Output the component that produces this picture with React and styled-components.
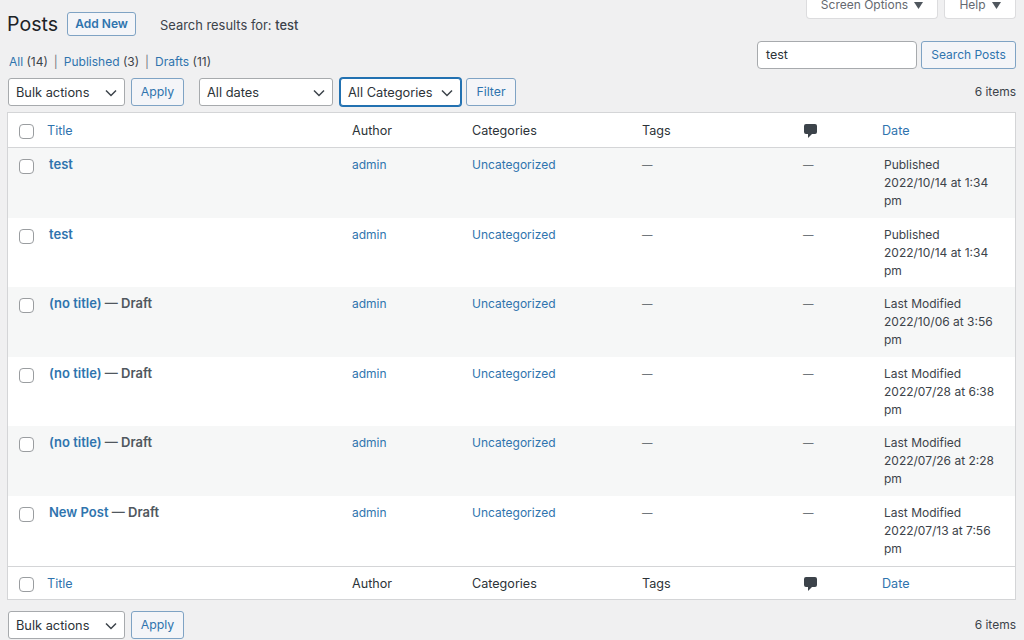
import React from "react";
import styled, { createGlobalStyle } from "styled-components";

const Global = createGlobalStyle`
  html, body { margin: 0; padding: 0; background: #f0f0f1; }
  body { font-family: Inter, "Liberation Sans", sans-serif; font-size: 12px; line-height: 18px; color: #3c434a; overflow: hidden; }
  * { box-sizing: border-box; }
`;

const Page = styled.div`
  width: 1024px;
  height: 640px;
  padding: 0 8px 0 7px;
  overflow: hidden;
`;
const Header = styled.header`
  display: flex;
  justify-content: space-between;
  align-items: flex-start;
  height: 70px;
`;
const HeadLeft = styled.div`
  display: flex;
  flex-direction: column;
  padding-top: 12px;
  padding-left: 1px;
`;
const TitleRow = styled.div`
  display: flex;
  align-items: center;
  height: 24px;
`;
const Heading = styled.h1`
  margin: 0 0 0 -1px;
  font-size: 19.6px;
  font-weight: 400;
  line-height: 24px;
  color: #1d2327;
`;
const OutlineButton = styled.button`
  font-family: inherit;
  font-size: 12px;
  line-height: 18px;
  height: ${p => p.$h || 28}px;
  width: ${p => p.$w}px;
  padding: 0;
  color: #2f74ae;
  background: #f4f5f8;
  border: 1px solid #7fa3c4;
  border-radius: 3px;
  font-weight: ${p => p.$bold ? 600 : 400};
  flex: none;
`;
const AddNew = styled(OutlineButton)`
  margin-left: 9px;
`;
const SearchNote = styled.span`
  margin-left: 24px;
  padding-top: 4px;
  font-size: 12.9px;
  strong { font-weight: 500; }
`;
const Views = styled.div`
  margin-top: 16px;
  padding: 1px 0 0 1px;
  height: 18px;
  display: flex;
  gap: 6px;
  font-size: 12px;
  white-space: pre;
  a { color: #2f74ae; }
`;
const Sep = styled.span`
  color: #787c82;
`;
const HeadRight = styled.div`
  display: flex;
  flex-direction: column;
  align-items: flex-end;
`;
const Tabs = styled.div`
  display: flex;
  gap: 6px;
  height: 19px;
`;
const Tab = styled.div`
  width: ${p => p.$w}px;
  height: 19px;
  background: #fff;
  border: 1px solid #dcdcde;
  border-top: none;
  border-radius: 0 0 4px 4px;
  display: flex;
  justify-content: center;
  align-items: flex-end;
  gap: 6px;
  padding-bottom: 4px;
  color: #646970;
  line-height: 18px;
  svg { margin-bottom: 5px; }
`;
const SearchRow = styled.div`
  display: flex;
  gap: 4px;
  margin-top: 22px;
`;
const SearchInput = styled.div`
  width: 160px;
  height: 28px;
  background: #fff;
  border: 1px solid #a7aaad;
  border-radius: 4px;
  padding: 4px 8px;
  font-size: 12.5px;
  color: #2c3338;
`;
const Toolbar = styled.div`
  display: flex;
  align-items: center;
  height: 28px;
  margin-top: ${p => p.$top}px;
  padding-left: 1px;
`;
const SelectBox = styled.div`
  width: ${p => p.$w}px;
  height: 28px;
  margin-left: ${p => p.$ml || 0}px;
  background: #fff;
  border: 1px solid ${p => p.$focus ? "#2271b1" : "#a7aaad"};
  box-shadow: ${p => p.$focus ? "0 0 0 1px #2271b1" : "none"};
  border-radius: 3px;
  display: flex;
  align-items: center;
  justify-content: space-between;
  padding: 1px 7px 0 7px;
  font-size: 12.8px;
  color: #2c3338;
  flex: none;
`;
const ToolButton = styled(OutlineButton)`
  margin-left: ${p => p.$ml}px;
  font-size: 12.3px;
`;
const Count = styled.span`
  margin-left: auto;
  padding-top: ${p => p.$pad}px;
`;
const Table = styled.div`
  margin-top: 6px;
  background: #fff;
  border: 1px solid #d4d5d7;
  width: 1009px;
  height: 488px;
`;
const GridRow = styled.div`
  display: grid;
  grid-template-columns: 39px 305px 120px 170px 161px 79px 1fr;
`;
const HeadRow = styled(GridRow)`
  height: ${p => p.$h}px;
  align-items: center;
  padding-top: 2px;
  font-size: 12.6px;
  color: #2c3338;
  border-${p => p.$side}: 1px solid #d4d5d7;
`;
const BodyRow = styled(GridRow)`
  height: 69.6px;
  background: ${p => p.$odd ? "#f6f7f7" : "#fff"};
  padding-top: 7px;
`;
const Link = styled.span`
  color: #2f74ae;
`;
const BodyLink = styled(Link)`
  padding-top: 1px;
`;
const Box = styled.span`
  display: block;
  width: 15px;
  height: 15px;
  margin: ${p => p.$top ? "4px" : "1px"} 0 0 11px;
  background: #fff;
  border: 1px solid #9a9da0;
  border-radius: 4px;
`;
const TitleCell = styled.div`
  padding-left: 2px;
  font-size: 13px;
  font-weight: 600;
  color: #50575e;
`;
const TitleLink = styled.span`
  color: #2f74ae;
`;
const DateCell = styled.div`
  padding: 1px 12px 0 2px;
`;
const Dash = styled.div`
  padding-top: 2px;
  font-size: 10.5px;
  color: #50575e;
`;
const CommentSvg = styled.svg`
  display: block;
  margin-left: 1px;
`;

const Chevron = () => (
  <svg width="12" height="8" viewBox="0 0 12 8" fill="none" stroke="#3c434a" strokeWidth="1.5"><path d="M1 1.5 L6 6.5 L11 1.5" /></svg>
);
const Caret = () => (
  <svg width="9" height="7" viewBox="0 0 9 7" fill="#50575e"><path d="M0 0H9L4.5 7Z" /></svg>
);
const CommentIcon = () => (
  <CommentSvg width="13" height="14" viewBox="0 0 13 14" fill="#3c434a">
    <path d="M2 0H11a2 2 0 0 1 2 2V8a2 2 0 0 1-2 2H8L4 14V10H2a2 2 0 0 1-2-2V2a2 2 0 0 1 2-2Z" />
  </CommentSvg>
);

const rows = [
  { t: "test", s: "Published", d: "2022/10/14 at 1:34 pm" },
  { t: "test", s: "Published", d: "2022/10/14 at 1:34 pm" },
  { t: "(no title)", draft: true, s: "Last Modified", d: "2022/10/06 at 3:56 pm" },
  { t: "(no title)", draft: true, s: "Last Modified", d: "2022/07/28 at 6:38 pm" },
  { t: "(no title)", draft: true, s: "Last Modified", d: "2022/07/26 at 2:28 pm" },
  { t: "New Post", draft: true, s: "Last Modified", d: "2022/07/13 at 7:56 pm" },
];

const Heads = ({ h, side }) => (
  <HeadRow $h={h} $side={side}>
    <Box />
    <Link>Title</Link>
    <div>Author</div>
    <div>Categories</div>
    <div>Tags</div>
    <CommentIcon />
    <Link>Date</Link>
  </HeadRow>
);

export default function App() {
  return (
    <Page>
      <Global />
      <Header>
        <HeadLeft>
          <TitleRow>
            <Heading>Posts</Heading>
            <AddNew $w={69} $h={24} $bold>Add New</AddNew>
            <SearchNote>Search results for: <strong>test</strong></SearchNote>
          </TitleRow>
          <Views>
            <span><a>All</a> (14)</span><Sep>|</Sep>
            <span><a>Published</a> (3)</span><Sep>|</Sep>
            <span><a>Drafts</a> (11)</span>
          </Views>
        </HeadLeft>
        <HeadRight>
          <Tabs>
            <Tab $w={132}>Screen Options <Caret /></Tab>
            <Tab $w={72}>Help <Caret /></Tab>
          </Tabs>
          <SearchRow>
            <SearchInput>test</SearchInput>
            <OutlineButton $w={95}>Search Posts</OutlineButton>
          </SearchRow>
        </HeadRight>
      </Header>
      <Toolbar $top={8}>
        <SelectBox $w={117}>Bulk actions <Chevron /></SelectBox>
        <ToolButton $w={53} $ml={6}>Apply</ToolButton>
        <SelectBox $w={134} $ml={15}>All dates <Chevron /></SelectBox>
        <SelectBox $w={121} $ml={7} $focus>All Categories <Chevron /></SelectBox>
        <ToolButton $w={50} $ml={5}>Filter</ToolButton>
        <Count $pad={0}>6 items</Count>
      </Toolbar>
      <Table>
        <Heads h={35} side="bottom" />
        {rows.map((r, i) => (
          <BodyRow key={i} $odd={i % 2 === 0}>
            <Box $top />
            <TitleCell>
              <TitleLink>{r.t}</TitleLink>{r.draft ? " — Draft" : ""}
            </TitleCell>
            <BodyLink>admin</BodyLink>
            <BodyLink>Uncategorized</BodyLink>
            <Dash>—</Dash>
            <Dash>—</Dash>
            <DateCell>{r.s}<br />{r.d}</DateCell>
          </BodyRow>
        ))}
        <Heads h={34} side="top" />
      </Table>
      <Toolbar $top={11}>
        <SelectBox $w={117}>Bulk actions <Chevron /></SelectBox>
        <ToolButton $w={53} $ml={6}>Apply</ToolButton>
        <Count $pad={0}>6 items</Count>
      </Toolbar>
    </Page>
  );
}
